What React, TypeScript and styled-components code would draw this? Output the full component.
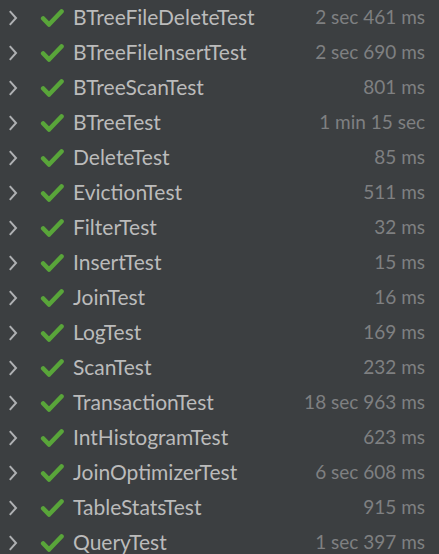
import styled, { createGlobalStyle } from 'styled-components';

const GlobalStyle = createGlobalStyle`
  html, body {
    margin: 0;
    padding: 0;
    background: #3c3f41;
  }
  body {
    font-family: Lato, "Open Sans", sans-serif;
  }
`;

const tests: [string, string][] = [
    ['BTreeFileDeleteTest', '2 sec 461 ms'],
    ['BTreeFileInsertTest', '2 sec 690 ms'],
    ['BTreeScanTest', '801 ms'],
    ['BTreeTest', '1 min 15 sec'],
    ['DeleteTest', '85 ms'],
    ['EvictionTest', '511 ms'],
    ['FilterTest', '32 ms'],
    ['InsertTest', '15 ms'],
    ['JoinTest', '16 ms'],
    ['LogTest', '169 ms'],
    ['ScanTest', '232 ms'],
    ['TransactionTest', '18 sec 963 ms'],
    ['IntHistogramTest', '623 ms'],
    ['JoinOptimizerTest', '6 sec 608 ms'],
    ['TableStatsTest', '915 ms'],
    ['QueryTest', '1 sec 397 ms'],
];

const Tree = styled.div`
    width: 439px;
    height: 554px;
    overflow: hidden;
    background: #3c3f41;
    display: flex;
    flex-direction: column;
`;

const Row = styled.div`
    flex: 0 0 35px;
    display: flex;
    align-items: center;
    padding: 0 14px 0 8px;
`;

const Chevron = styled.svg`
    width: 10px;
    height: 16px;
    flex: none;
`;

const Check = styled.svg`
    width: 24px;
    height: 20px;
    margin-left: 22px;
    flex: none;
`;

const Name = styled.span`
    margin: -3px 0 0 9px;
    font-size: 21px;
    color: #bbbbbb;
    flex: 1;
    white-space: nowrap;
`;

const Time = styled.span`
    margin-top: -3px;
    font-size: 19px;
    color: #7f8081;
    white-space: nowrap;
`;

const TestRow = ({ name, time }: { name: string; time: string }) => (
    <Row>
        <Chevron viewBox="0 0 10 16">
            <path d="M1.8 1.2 L8 8 L1.8 14.8" fill="none" stroke="#afb1b3" strokeWidth="2" />
        </Chevron>
        <Check viewBox="0 0 24 20">
            <path d="M3.2 10.5 L9 16.5 L21.5 3.5" fill="none" stroke="#59a53a" strokeWidth="4.6" strokeLinecap="round" strokeLinejoin="round" />
        </Check>
        <Name>{name}</Name>
        <Time>{time}</Time>
    </Row>
);

export default function App() {
    return (
        <>
            <GlobalStyle />
            <Tree>
                {tests.map(([name, time]) => (
                    <TestRow key={name} name={name} time={time} />
                ))}
            </Tree>
        </>
    );
}
